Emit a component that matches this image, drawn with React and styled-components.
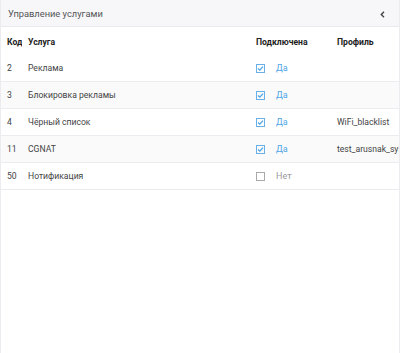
import React from 'react';
import styled, { createGlobalStyle } from 'styled-components';

const Global = createGlobalStyle`
  body {
    margin: 0;
    background: #fff;
    font-family: Roboto, "Liberation Sans", Arial, sans-serif;
  }
`;

const services = [
  { code: 2, name: 'Реклама', on: true, profile: '' },
  { code: 3, name: 'Блокировка рекламы', on: true, profile: '' },
  { code: 4, name: 'Чёрный список', on: true, profile: 'WiFi_blacklist' },
  { code: 11, name: 'CGNAT', on: true, profile: 'test_arusnak_sys_profile' },
  { code: 50, name: 'Нотификация', on: false, profile: '' },
];

const Panel = styled.div`
  width: 400px;
  height: 353px;
  box-sizing: border-box;
  border-left: 1px solid #ececf0;
  border-right: 1px solid #ececf0;
  overflow: hidden;
  background: #fff;
`;

const Header = styled.div`
  height: 27px;
  box-sizing: border-box;
  display: flex;
  align-items: center;
  justify-content: space-between;
  padding: 0 14px 0 7px;
  background: #f7f7fa;
  border-bottom: 1px solid #e9e9ee;
  font-size: 9.3px;
  color: #555;
`;

const Back = styled.span`
  display: flex;
  align-items: center;
  margin-top: 3px;
`;

const Grid = styled.div`
  display: grid;
  grid-template-columns: 21px 228px 81px 200px;
  margin-top: 1px;
`;

const Row = styled.div`
  display: contents;
  & > div {
    background: ${p => (p.$striped ? '#fafafa' : '#fff')};
    border-bottom: ${p => (p.$head ? 'none' : '1px solid #ececf0')};
    height: ${p => (p.$head ? '27px' : '26px')};
    font-weight: ${p => (p.$head ? 'bold' : 'normal')};
    color: ${p => (p.$head ? '#222' : '#444')};
  }
`;

const Cell = styled.div`
  display: flex;
  align-items: center;
  gap: 11px;
  padding-left: 6px;
  font-size: 8.6px;
  white-space: nowrap;
  overflow: ${p => (p.$clip ? 'hidden' : 'visible')};
`;

const Box = styled.span`
  width: 9px;
  height: 9px;
  box-sizing: border-box;
  border: 1px solid ${p => (p.$on ? '#6ab0e8' : '#aaa')};
  display: flex;
  align-items: center;
  justify-content: center;
`;

const State = styled.span`
  color: ${p => (p.$on ? '#4ea6e6' : '#9a9a9a')};
  font-size: 9px;
`;

const Check = ({ on }) => (
  <Box $on={on}>
    {on && (
      <svg width="7" height="7" viewBox="0 0 7 7">
        <path d="M1 3.6 L2.8 5.2 L6 1.6" fill="none" stroke="#4ea6e6" strokeWidth="1.3" />
      </svg>
    )}
  </Box>
);

export default function App() {
  return (
    <>
      <Global />
      <Panel>
        <Header>
          <span>Управление услугами</span>
          <Back>
            <svg width="5" height="7" viewBox="0 0 5 7">
              <path d="M4 0.8 L1.3 3.5 L4 6.2" fill="none" stroke="#444" strokeWidth="1.4" />
            </svg>
          </Back>
        </Header>
        <Grid>
          <Row $head>
            <Cell>Код</Cell>
            <Cell>Услуга</Cell>
            <Cell>Подключена</Cell>
            <Cell $clip>Профиль</Cell>
          </Row>
          {services.map((s, i) => (
            <Row key={s.code} $striped={i % 2 === 1}>
              <Cell>{s.code}</Cell>
              <Cell>{s.name}</Cell>
              <Cell>
                <Check on={s.on} />
                <State $on={s.on}>{s.on ? 'Да' : 'Нет'}</State>
              </Cell>
              <Cell $clip>{s.profile}</Cell>
            </Row>
          ))}
        </Grid>
      </Panel>
    </>
  );
}
